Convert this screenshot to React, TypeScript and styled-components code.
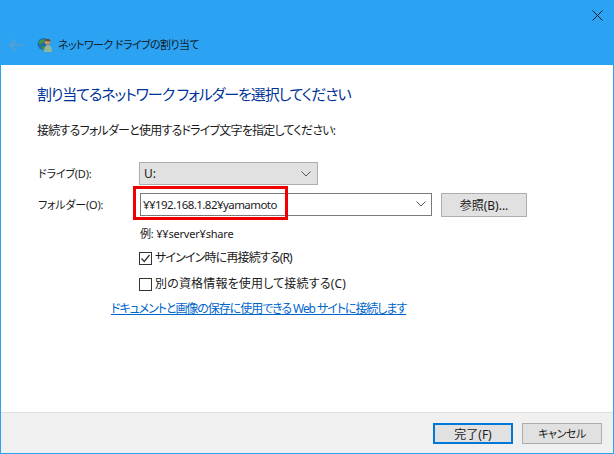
import React from "react";
import styled, { createGlobalStyle } from "styled-components";

const Global = createGlobalStyle`
  html, body { margin: 0; padding: 0; background: #fff; }
  body {
    font-family: "Noto Sans", "Noto Sans CJK JP", "Liberation Sans", sans-serif; font-size: 12px; color: #1a1a1a;
    font-feature-settings: "palt" 1;
  }
`;
const Win = styled.div`
  width: 614px; height: 454px; box-sizing: border-box; border: 1px solid #2ba3f2; border-top: 0;
  display: flex; flex-direction: column; background: #fff; overflow: hidden;
`;
const Header = styled.header`
  height: 65px; flex: none; background: #2ba3f2; margin: 0 -1px; position: relative; box-sizing: border-box;
  display: flex; align-items: center; padding: 25px 0 0 9px;
`;
const Close = styled.svg`position: absolute; right: 11px; top: 10px;`;
const TitleText = styled.span`font-size: 11px; letter-spacing: -0.6px; line-height: 16px; color: #10202c; margin-left: 5px;`;
const GlobeIcon = styled.svg`margin-left: 12px;`;
const Body = styled.main`flex: 1; padding: 18px 0 0 36px; display: flex; flex-direction: column;`;
const Heading = styled.h1`margin: 0; font-size: 15px; letter-spacing: -1.1px; font-weight: 400; line-height: 22px; color: #003399;`;
const Intro = styled.p`margin: 17px 0 0; line-height: 18px; font-size: 12px; letter-spacing: -0.77px;`;
const Form = styled.div`
  margin-top: 22px; display: grid; grid-template-columns: 102px 1fr; row-gap: 7px; align-items: center;
`;
const Label = styled.span`font-size: 11px; letter-spacing: -0.2px; line-height: 18px; padding: 1px 0 0 1px;`;
const Select = styled.div`
  width: 179px; height: 23px; box-sizing: border-box; background: #e1e1e1; border: 1px solid #adadad;
  display: flex; align-items: center; justify-content: space-between; padding: 0 6px 0 4px;
`;
const Row = styled.div`display: flex; align-items: center; position: relative;`;
const Combo = styled.div`
  width: 292px; height: 23px; box-sizing: border-box; background: #fff; border: 1px solid #7a7a7a; margin-left: 1px;
  display: flex; align-items: center; justify-content: space-between; padding: 0 5px 0 2px;
`;
const ComboValue = styled.span`font-size: 11.5px; letter-spacing: -0.55px;`;
const RedBox = styled.div`
  position: absolute; left: -6px; top: -6px; width: 155px; height: 34px; box-sizing: border-box;
  border: 3px solid #f00000; pointer-events: none;
`;
const Button = styled.button<{ $primary?: boolean; $tight?: boolean }>`
  width: 80px; height: 21px; box-sizing: border-box; padding: 0;
  background: #e1e1e1; border: ${p => (p.$primary ? "2px solid #0078d7" : "1px solid #adadad")};
  font: inherit; font-size: ${p => (p.$tight ? "11px" : "12px")}; letter-spacing: ${p => (p.$tight ? "-0.4px" : "0")};
  font-feature-settings: "palt" 1; color: #1a1a1a;
`;
const Browse = styled(Button)`width: 86px; height: 24px; margin-left: 9px; position: relative; top: 1px;`;
const Options = styled.div`margin-left: 103px; display: flex; flex-direction: column;`;
const Example = styled.div`margin-top: 9px; line-height: 18px; font-size: 11px; letter-spacing: -0.2px;`;
const Check = styled.label<{ $spacing: number; $first?: boolean }>`
  display: flex; align-items: center; gap: 3px; line-height: 18px; margin-top: ${p => (p.$first ? "6px" : "8px")};
  letter-spacing: ${p => p.$spacing}px;
`;
const Box = styled.span`
  width: 13px; height: 13px; box-sizing: border-box; border: 1px solid #333; display: flex; margin-left: -1px;
  align-items: center; justify-content: center; background: #fff;
`;
const Link = styled.a`
  display: block; margin: 7px 0 0 74px; color: #0066cc; text-decoration: underline; line-height: 18px; font-size: 12px;
  letter-spacing: -1.06px;
`;
const Footer = styled.footer`
  height: 40px; flex: none; background: #f0f0f0; border-top: 1px solid #dfdfdf; box-sizing: content-box;
  display: flex; justify-content: flex-end; align-items: center; gap: 9px; padding-right: 11px;
`;
const Chevron = () => (
  <svg width="10" height="6" viewBox="0 0 10 6"><path d="M0.5 0.5 L5 5 L9.5 0.5" fill="none" stroke="#555" strokeWidth="1" /></svg>
);

export default function App() {
  return (
    <Win>
      <Global />
      <Header>
        <svg width="16" height="14" viewBox="0 0 16 14"><path d="M13 7H1.500M6.500 1.500 1 7l5.500 5.500" fill="none" stroke="#5c9ecb" strokeWidth="1.6" /></svg>
        <GlobeIcon width="16" height="16" viewBox="0 0 16 16">
          <circle cx="6.500" cy="7" r="6" fill="#1d6fa8" />
          <path d="M2 5c2-3 4-3 5-2s-1 3-3 4-2 0-2-2zM5 9c2 0 3 1 2.500 3L5 12.500z" fill="#3f9a3a" />
          <circle cx="10.500" cy="5" r="2.800" fill="#c89468" />
          <path d="M10.500 1.800c2 0 3 1.200 3 2.700l-5.500-.5c.2-1.300 1.200-2.200 2.500-2.200z" fill="#6b4a30" />
          <path d="M7 15c0-5 1.500-7 4-7s4 2 4 7z" fill="#8fb59a" />
        </GlobeIcon>
        <TitleText>ネットワーク ドライブの割り当て</TitleText>
        <Close width="11" height="11" viewBox="0 0 11 11"><path d="M.5.5l10 10M10.500.5l-10 10" stroke="#0b1a26" strokeWidth="1" /></Close>
      </Header>
      <Body>
        <Heading>割り当てるネットワーク フォルダーを選択してください</Heading>
        <Intro>接続するフォルダーと使用するドライブ文字を指定してください:</Intro>
        <Form>
          <Label>ドライブ(D):</Label>
          <Select><span>U:</span><Chevron /></Select>
          <Label>フォルダー(O):</Label>
          <Row>
            <Combo><ComboValue>¥¥192.168.1.82¥yamamoto</ComboValue><Chevron /></Combo>
            <Browse>参照(B)...</Browse>
            <RedBox />
          </Row>
        </Form>
        <Options>
          <Example>例: ¥¥server¥share</Example>
          <Check $first $spacing={-0.85}>
            <Box><svg width="9" height="9" viewBox="0 0 9 9"><path d="M.5 4.500 3.300 7.500 8.500 1" fill="none" stroke="#333" strokeWidth="1.300" /></svg></Box>
            サインイン時に再接続する(R)
          </Check>
          <Check $spacing={0.17}>
            <Box />
            別の資格情報を使用して接続する(C)
          </Check>
        </Options>
        <Link>ドキュメントと画像の保存に使用できる Web サイトに接続します</Link>
      </Body>
      <Footer>
        <Button $primary>完了(F)</Button>
        <Button $tight>キャンセル</Button>
      </Footer>
    </Win>
  );
}
